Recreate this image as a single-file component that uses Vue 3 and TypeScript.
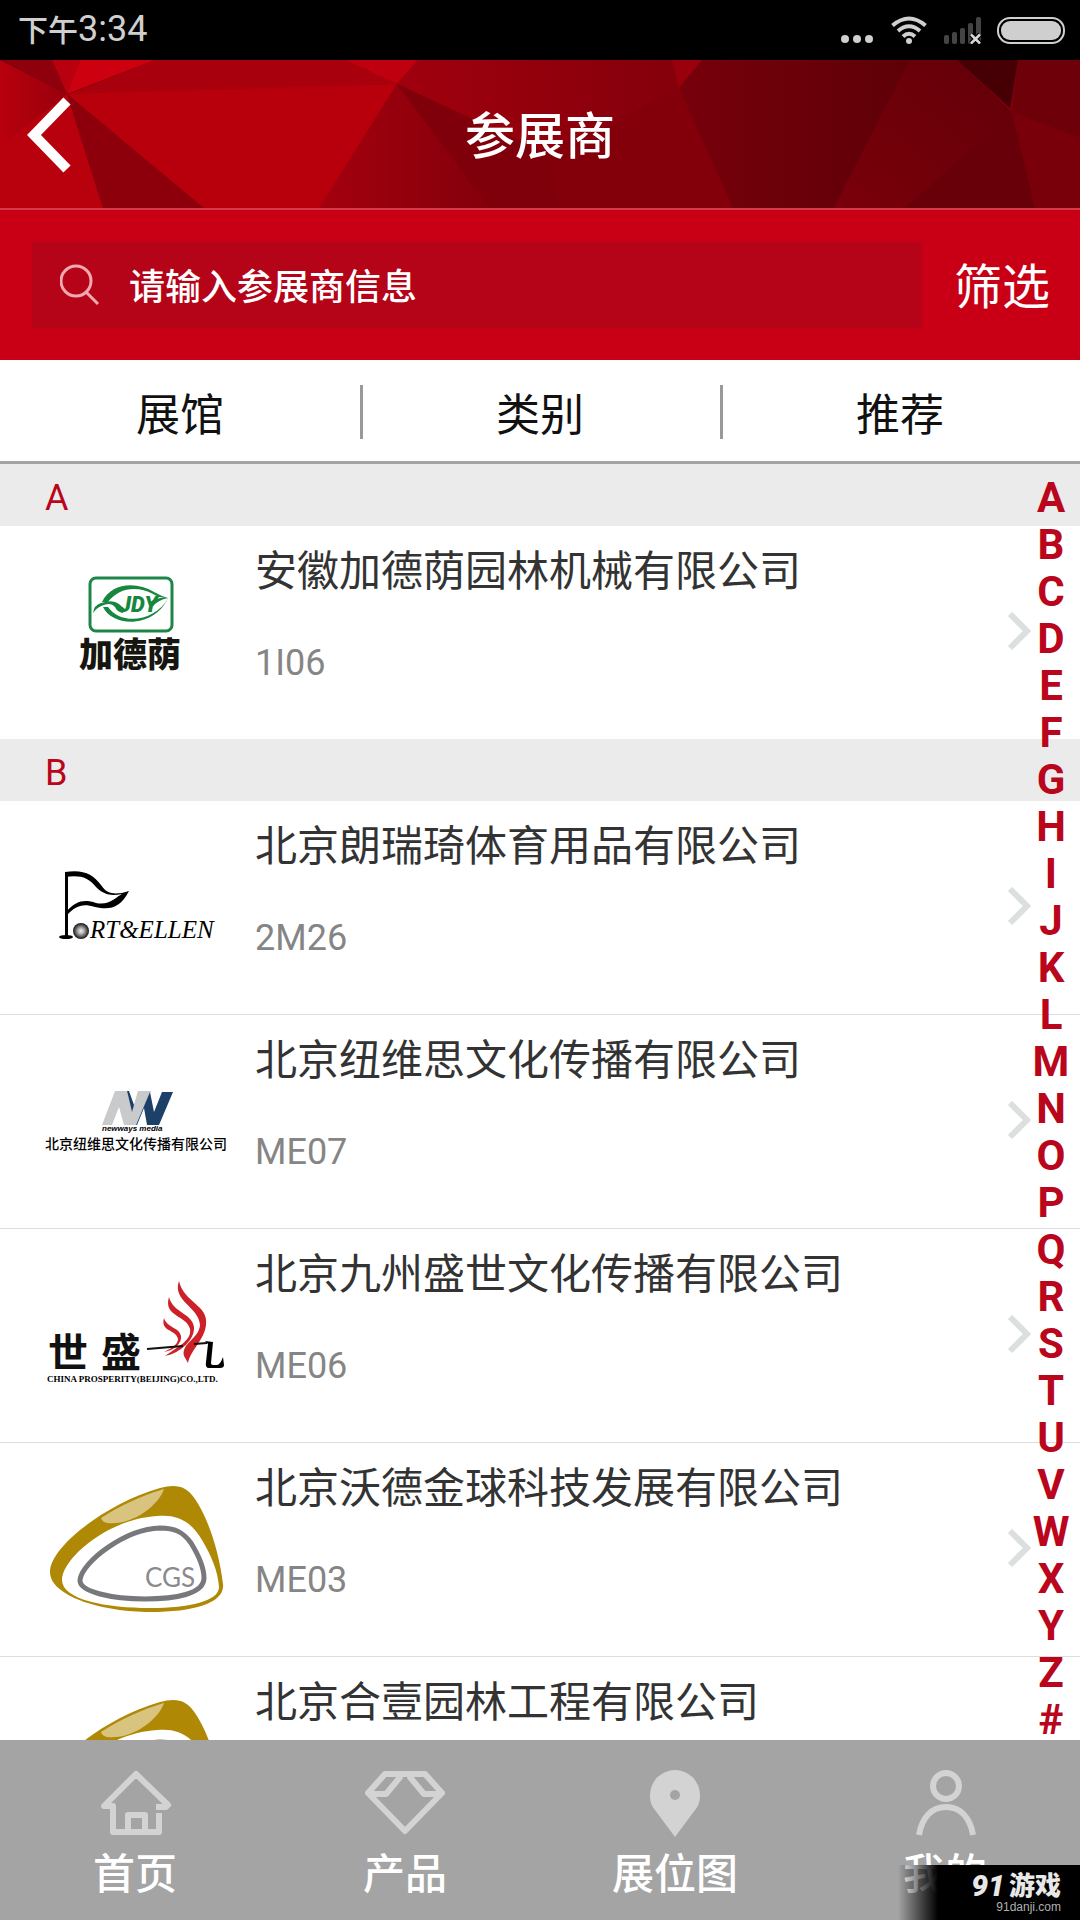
<script setup lang="ts">
import { ref } from 'vue'

type LogoKind = 'jdy' | 'port' | 'newways' | 'prosperity' | 'cgs'

interface Exhibitor {
  name: string
  booth: string
  logo: LogoKind
}

interface Section {
  letter: string
  items: Exhibitor[]
}

const keyword = ref('')
const tabs: string[] = ['展馆', '类别', '推荐']
const letters: string[] = 'ABCDEFGHIJKLMNOPQRSTUVWXYZ#'.split('')

const sections: Section[] = [
  {
    letter: 'A',
    items: [{ name: '安徽加德荫园林机械有限公司', booth: '1I06', logo: 'jdy' }],
  },
  {
    letter: 'B',
    items: [
      { name: '北京朗瑞琦体育用品有限公司', booth: '2M26', logo: 'port' },
      { name: '北京纽维思文化传播有限公司', booth: 'ME07', logo: 'newways' },
      { name: '北京九州盛世文化传播有限公司', booth: 'ME06', logo: 'prosperity' },
      { name: '北京沃德金球科技发展有限公司', booth: 'ME03', logo: 'cgs' },
      { name: '北京合壹园林工程有限公司', booth: '', logo: 'cgs' },
    ],
  },
]
</script>

<template>
  <div class="app">
    <div class="status">
      <span class="clock"><span class="period">下午</span>3:34</span>
      <div class="indicators">
        <svg width="34" height="28" viewBox="0 0 34 28" fill="#cfcfcf">
          <circle cx="4" cy="23" r="4" /><circle cx="16" cy="23" r="4" /><circle cx="28" cy="23" r="4" />
        </svg>
        <svg width="36" height="28" viewBox="0 0 36 28" fill="none" stroke="#cfcfcf" stroke-width="4">
          <path d="M1.500 9.500Q18-4.500 34.500 9.500" />
          <path d="M7 15Q18 5.500 29 15" />
          <path d="M12 20.500Q18 15 24 20.500" />
          <circle cx="18" cy="25" r="3" fill="#cfcfcf" stroke="none" />
        </svg>
        <svg width="38" height="28" viewBox="0 0 38 28">
          <g fill="#444">
            <rect x="1" y="19" width="5" height="9" rx="2" />
            <rect x="9" y="16" width="5" height="12" rx="2" />
            <rect x="17" y="12" width="5" height="16" rx="2" />
            <rect x="25" y="7" width="5" height="21" rx="2" />
            <rect x="33" y="1" width="5" height="27" rx="2" />
          </g>
          <path d="M28 18.500l9 9m0-9l-9 9" stroke="#000" stroke-width="5" />
          <path d="M28 18.500l9 9m0-9l-9 9" stroke="#d8d8d8" stroke-width="2.500" />
        </svg>
        <svg width="68" height="28" viewBox="0 0 68 28">
          <rect x="1" y="2" width="66" height="25" rx="12" fill="none" stroke="#cfcfcf" stroke-width="2" />
          <rect x="4" y="5" width="60" height="19" rx="9" fill="#cfcfcf" />
        </svg>
      </div>
    </div>

    <header class="header">
      <svg class="facets" viewBox="0 0 1080 148" preserveAspectRatio="none" aria-hidden="true">
        <defs>
          <linearGradient id="edge"><stop offset="0" stop-color="#b9000e" /><stop offset="1" stop-color="#97000c" /></linearGradient>
          <linearGradient id="mid"><stop offset="0" stop-color="#a4000d" /><stop offset="1" stop-color="#83000b" /></linearGradient>
          <linearGradient id="top"><stop offset="0" stop-color="#a0000d" /><stop offset="1" stop-color="#84000b" /></linearGradient>
          <linearGradient id="deep"><stop offset="0" stop-color="#77000b" /><stop offset="1" stop-color="#5e0007" /></linearGradient>
          <linearGradient id="far" x1="0" y1="1" x2="1" y2="0"><stop offset="0" stop-color="#7a000a" /><stop offset="1" stop-color="#620008" /></linearGradient>
        </defs>
        <rect width="1080" height="148" fill="#7d000a" />
        <path d="M0 0L67 34L0 88Z" fill="url(#edge)" />
        <path d="M3 0H52L67 34Z" fill="#8d000c" />
        <path d="M52 0H80L67 34Z" fill="#b8000e" />
        <path d="M80 0H155L67 34Z" fill="#cd0010" />
        <path d="M155 0H345L397 24L67 35Z" fill="#a9000d" />
        <path d="M0 87L67 34L103 148H0Z" fill="#b9000d" />
        <path d="M67 34L397 24L320 148H203Z" fill="#b8000d" />
        <path d="M67 34L204 148H103Z" fill="#8d000b" />
        <path d="M345 0H418L397 24Z" fill="#bf000f" />
        <path d="M418 0H672L679 28L610 65L540 90L470 58L397 24Z" fill="url(#top)" />
        <path d="M397 24L491 148H319Z" fill="url(#mid)" />
        <path d="M397 24L470 58L550 105L560 148H490Z" fill="#7f000a" />
        <path d="M679 28L733 148H560L548 92L610 65Z" fill="#83000b" />
        <path d="M672 0H702L679 28Z" fill="#9a000c" />
        <path d="M702 0H910L834 148H733L679 28Z" fill="url(#deep)" />
        <path d="M910 0H957L1012 52L905 148H834Z" fill="url(#far)" />
        <path d="M1012 52L1035 148H905Z" fill="#670008" />
        <path d="M957 0H1018L1010 48Z" fill="#460005" />
        <path d="M1018 0H1080V78L1012 52Z" fill="#6d0009" />
        <path d="M1012 52L1080 78V148H1035Z" fill="#79000a" />
      </svg>
      <button class="back" type="button" aria-label="返回">
        <svg width="46" height="76" viewBox="0 0 46 76" fill="none" stroke="#fff" stroke-width="10">
          <path d="M40 4L7 38L40 72" />
        </svg>
      </button>
      <h1 class="title">参展商</h1>
    </header>

    <form class="search" @submit.prevent>
      <label class="field">
        <svg width="40" height="42" viewBox="0 0 40 42" fill="none" stroke="#f0a9b0" stroke-width="3">
          <circle cx="16" cy="17" r="15" /><path d="M26 28L38 40" />
        </svg>
        <input v-model="keyword" type="text" placeholder="请输入参展商信息" aria-label="请输入参展商信息" />
      </label>
      <button class="filter" type="submit">筛选</button>
    </form>

    <div class="tabs">
      <button v-for="tab in tabs" :key="tab" class="tab" type="button">{{ tab }}</button>
    </div>

    <main class="content">
      <div class="list">
        <section v-for="section in sections" :id="'s-' + section.letter" :key="section.letter">
          <h2 class="letter">{{ section.letter }}</h2>
          <ul class="rows">
            <li v-for="item in section.items" :key="item.name">
              <a class="row" href="#">
                <svg v-if="item.logo === 'jdy'" class="logo" viewBox="0 0 181 181">
                  <rect x="45" y="36" width="82" height="53" rx="6" fill="#fff" stroke="#1d8548" stroke-width="3" />
                  <g fill="#16873f">
                    <path d="M57 60C66 41 91 39 109 50Q116 54 123 56Q114 56 108 52C92 43 73 46 63 60Z" />
                    <path d="M58 65C67 85 109 87 123 56C112 78 77 85 63 65Z" />
                    <path d="M48 71Q49 63 56 61Q68 57 74 62Q77 65 80 67L78 71Q72 70 70 65Q66 60 59 63Q52 65 48 71Z" />
                    <path d="M105 60Q113 55 123 56Q113 58 107 65Z" />
                  </g>
                  <text x="74" y="70" class="jdy">JDY</text>
                  <text x="34" y="125" class="jdy-cn">加德荫</text>
                </svg>

                <svg v-else-if="item.logo === 'port'" class="logo" viewBox="0 0 181 181">
                  <defs>
                    <radialGradient id="ball"><stop offset="0" stop-color="#f4f4f4" /><stop offset="0.400" stop-color="#aaa" /><stop offset="1" stop-color="#111" /></radialGradient>
                  </defs>
                  <path d="M20 56H23V120H20Z" />
                  <ellipse cx="21" cy="120" rx="7" ry="2" />
                  <path d="M20 55C38 52 48 57 56 68C62 77 68 77 77 76L84 74C75 92 64 93 50 90C37 86 31 89 22 98V94C31 84 39 82 51 86C64 89 71 80 77 77C66 79 59 78 51 70C43 60 35 58 20 60Z" />
                  <circle cx="36" cy="114" r="8" fill="url(#ball)" />
                  <text x="45" y="121" class="port">RT&amp;ELLEN</text>
                </svg>

                <svg v-else-if="item.logo === 'newways'" class="logo" viewBox="0 0 181 181">
                  <path d="M57 94L70 60H82L87 80L93 60H106L91 94H79L74 76L67 94Z" fill="#c9cacb" />
                  <path d="M82 60H84L89 74L87 81ZM91 94L105 61L109 81L117 61H128L114 94H102L99 77L92 94Z" fill="#1c4068" />
                  <text x="57" y="100" class="nw-en">newways media</text>
                  <text x="0" y="118" class="nw-cn">北京纽维思文化传播有限公司</text>
                </svg>

                <svg v-else-if="item.logo === 'prosperity'" class="logo" viewBox="0 0 181 181">
                  <g fill="#cc2128">
                    <path d="M134 36C127 56 154 62 155 80C154 94 136 98 139 111L143 118C146 104 159 96 161 80C164 60 139 58 134 36Z" />
                    <path d="M124 52C118 72 142 70 145 84C147 95 134 101 120 111C136 108 150 94 149 82C147 68 128 68 124 52Z" />
                    <path d="M119 73C115 87 131 84 133 94C133 100 125 104 119 107C130 105 137 98 136 91C134 82 122 83 119 73Z" />
                  </g>
                  <path d="M102 104L138 101M149 99L162 98" fill="none" stroke="#111" stroke-width="2" />
                  <path d="M160 96L168 97L166 118Q166 120 168 120H172Q175 120 178 112L179 120Q179 123 175 123H164Q160 123 161 117L163 99Z" />
                  <text x="3" y="122" class="cp-cn">世</text>
                  <text x="56" y="122" class="cp-cn">盛</text>
                  <text x="2" y="137" class="cp-en">CHINA PROSPERITY(BEIJING)CO.,LTD.</text>
                </svg>

                <svg v-else class="logo" viewBox="0 0 181 181">
                  <path d="M5 113C5 88 60 45 115 29C130 25 141 26 150 40C163 59 174 92 178 125C180 144 150 153 105 153C60 153 5 138 5 113Z" fill="#af8905" />
                  <path d="M17 121C17 100 62 60 112 57C132 55 146 62 157 81C166 96 173 112 174 128C174 142 145 149 105 149C62 149 17 141 17 121Z" fill="#fff" />
                  <path d="M56 59C76 46 98 36 119 30C114 46 87 67 62 64Q57 63 56 59Z" fill="#d8c47f" />
                  <path d="M35 121C37 103 80 70 115 69C130 69 138 73 146 84C154 97 159 108 159 119C159 135 130 140 100 140C68 140 34 133 35 121Z" fill="none" stroke="#77787b" stroke-width="5" />
                  <text x="100" y="128" class="cgs">CGS</text>
                </svg>

                <span class="info">
                  <span class="name">{{ item.name }}</span>
                  <span class="booth">{{ item.booth }}</span>
                </span>
                <svg class="chevron" width="24" height="42" viewBox="0 0 24 42" fill="none" stroke="#dcdfdf" stroke-width="6">
                  <path d="M3 2L20 19L3 36" />
                </svg>
              </a>
            </li>
          </ul>
        </section>
      </div>
      <nav class="index" aria-label="字母索引">
        <a v-for="l in letters" :key="l" :href="'#s-' + l">{{ l }}</a>
      </nav>
    </main>

    <nav class="bottom">
      <a class="item" href="#">
        <svg width="80" height="70" viewBox="0 0 80 70" fill="none" stroke="#d3d3d3" stroke-width="6" stroke-linejoin="round">
          <path d="M64 45V64H18V38H9L41 6L73 37L71 39H61M33 64V47H50V64" />
        </svg>
        <span>首页</span>
      </a>
      <a class="item" href="#">
        <svg width="80" height="70" viewBox="0 0 80 70" fill="none" stroke="#d3d3d3" stroke-width="6" stroke-linejoin="round">
          <path d="M20 6H60L77 25L40 63L3 25ZM3 26H21L36 8M77 26H59L44 8" />
        </svg>
        <span>产品</span>
      </a>
      <a class="item" href="#">
        <svg width="80" height="70" viewBox="0 0 80 70">
          <path d="M40 69L20 42C16 37 15 33 15 27A25 25 0 0 1 65 27C65 33 64 37 60 42Z" fill="#d3d3d3" />
          <circle cx="40" cy="27" r="5" fill="#a4a4a4" />
        </svg>
        <span>展位图</span>
      </a>
      <a class="item" href="#">
        <svg width="80" height="70" viewBox="0 0 80 70" fill="none" stroke="#d3d3d3" stroke-width="6">
          <circle cx="41" cy="18" r="13" /><path d="M14 67C17 49 27 39 41 39S65 49 68 67" />
        </svg>
        <span>我的</span>
      </a>
      <div class="watermark">
        <div class="brand"><span class="brand-num">91</span><span>游戏</span></div>
        <div class="domain">91danji.com</div>
      </div>
    </nav>
  </div>
</template>

<style>
body {
  margin: 0;
}
</style>

<style scoped>
.app {
  display: flex;
  flex-direction: column;
  height: 100vh;
  overflow: hidden;
  background: #fff;
  color: #333;
  font-family: Roboto, 'Noto Sans CJK SC', sans-serif;
}
button,
input {
  margin: 0;
  padding: 0;
  border: 0;
  background: none;
  color: inherit;
  font-family: inherit;
}
a {
  color: inherit;
  text-decoration: none;
}
svg {
  display: block;
  flex: none;
}
.status {
  display: flex;
  flex: none;
  align-items: center;
  justify-content: space-between;
  height: 60px;
  padding: 0 15px 0 18px;
  background: #000;
  color: #cfcfcf;
}
.clock {
  font-size: 36px;
  line-height: 60px;
}
.period {
  font-size: 30px;
  font-weight: 500;
}
.indicators {
  display: flex;
  gap: 16px;
}
.header {
  position: relative;
  display: flex;
  flex: none;
  align-items: center;
  justify-content: center;
  height: 148px;
  border-bottom: 2px solid #d63a4a;
  color: #fff;
}
.facets {
  position: absolute;
  inset: 0;
  width: 100%;
  height: 100%;
}
.back {
  position: absolute;
  left: 27px;
  top: 37px;
}
.title {
  position: relative;
  margin: 0;
  padding-top: 6px;
  font-size: 50px;
  font-weight: 500;
  line-height: 60px;
}
.search {
  display: flex;
  flex: none;
  align-items: center;
  gap: 32px;
  height: 150px;
  padding: 0 30px 0 32px;
  background: #c90015;
  color: #fff;
}
.field {
  display: flex;
  flex: 1;
  align-items: center;
  gap: 29px;
  height: 86px;
  padding-left: 28px;
  background: #b50318;
}
.field input {
  flex: 1;
  min-width: 0;
  height: 60px;
  padding-top: 6px;
  outline: none;
  font-size: 36px;
  font-weight: 500;
}
.field input::placeholder {
  color: #fff;
  opacity: 1;
}
.filter {
  padding-top: 6px;
  font-size: 48px;
  line-height: 60px;
}
.tabs {
  display: flex;
  flex: none;
  height: 101px;
  border-bottom: 3px solid #a4a4a4;
}
.tab {
  display: flex;
  flex: 1;
  align-items: center;
  justify-content: center;
  padding-top: 2px;
  color: #111;
  font-size: 44px;
}
.tab + .tab {
  background: linear-gradient(#999, #999) 0 25px / 3px 54px no-repeat;
}
.content {
  position: relative;
  flex: 1;
  min-height: 0;
}
.list {
  height: 100%;
  overflow-y: auto;
  scrollbar-width: none;
}
.letter {
  margin: 0;
  padding: 6px 45px 0;
  background: #ebebeb;
  color: #b9061c;
  font-size: 36px;
  font-weight: 400;
  line-height: 56px;
}
.rows {
  margin: 0;
  padding: 0;
  list-style: none;
}
.rows li + li {
  border-top: 1px solid #ddd;
}
.row {
  display: flex;
  align-items: center;
  height: 213px;
  padding: 0 49px 0 45px;
}
.logo {
  width: 181px;
  height: 181px;
  overflow: visible;
}
.info {
  display: flex;
  flex: 1;
  flex-direction: column;
  align-self: flex-start;
  gap: 46px;
  min-width: 0;
  padding: 22px 0 0 29px;
}
.name {
  font-size: 42px;
  line-height: 48px;
  white-space: nowrap;
}
.booth {
  color: #858585;
  font-size: 36px;
  line-height: 42px;
}
.index {
  position: absolute;
  top: 10px;
  right: 7px;
  display: flex;
  flex-direction: column;
  width: 44px;
  color: #b9061c;
  font-size: 42px;
  font-weight: 700;
  line-height: 47px;
  text-align: center;
}
.bottom {
  position: relative;
  display: flex;
  flex: none;
  height: 180px;
  background: #a4a4a4;
  color: #fff;
}
.item {
  display: flex;
  flex: 1;
  flex-direction: column;
  align-items: center;
  gap: 13px;
  padding-top: 28px;
  font-size: 42px;
  font-weight: 500;
  line-height: 48px;
}
.watermark {
  position: absolute;
  right: 0;
  bottom: 0;
  box-sizing: border-box;
  width: 182px;
  height: 55px;
  padding: 8px 19px 0 0;
  background: linear-gradient(90deg, transparent, #000 40px);
  color: #e8e8e8;
  text-align: right;
}
.brand {
  display: flex;
  justify-content: flex-end;
  gap: 4px;
  font-size: 26px;
  font-weight: 900;
  line-height: 26px;
}
.brand-num {
  font-size: 30px;
  font-style: italic;
}
.domain {
  color: #b0b0b0;
  font-family: 'Liberation Sans', sans-serif;
  font-size: 12px;
  line-height: 16px;
}
.jdy {
  fill: #16873f;
  font-size: 22px;
  font-style: italic;
  font-weight: 900;
}
.jdy-cn {
  fill: #17150f;
  font-size: 34px;
  font-weight: 900;
}
.port {
  font-family: 'Liberation Serif', serif;
  font-size: 25px;
  font-style: italic;
}
.nw-en {
  font-family: 'Liberation Sans', sans-serif;
  font-size: 8px;
  font-style: italic;
  font-weight: 700;
}
.nw-cn {
  font-size: 14px;
  font-weight: 500;
}
.cp-cn {
  fill: #111;
  font-size: 40px;
  font-weight: 700;
}
.cp-en {
  font-family: 'Liberation Serif', serif;
  font-size: 9px;
  font-weight: 700;
}
.cgs {
  fill: #8a8a8c;
  font-family: Lato, sans-serif;
  font-size: 26px;
}
</style>
